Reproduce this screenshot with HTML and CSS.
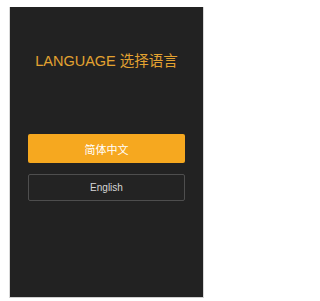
FILE: index.html
```html
<!DOCTYPE html>
<html lang="zh">
<head>
<meta charset="utf-8">
<link rel="stylesheet" href="styles.css">
</head>
<body>
<div class="panel">
  <h1 class="title">LANGUAGE 选择语言</h1>
  <div class="buttons">
    <div class="btn btn-primary">简体中文</div>
    <div class="btn btn-outline">English</div>
  </div>
</div>
</body>
</html>
```
FILE: styles.css
```css
html, body {
  margin: 0;
  padding: 0;
  background: #ffffff;
}
body {
  padding: 7px 0 0 9px;
  font-family: "Liberation Sans", Arial, "Noto Sans CJK SC", sans-serif;
}
.panel {
  box-sizing: border-box;
  width: 195px;
  height: 291px;
  background: #222222;
  border-left: 1px solid #d8d8d8;
  border-right: 1px solid #d8d8d8;
  border-bottom: 1px solid #cfcfcf;
  padding: 46px 18px 0 18px;
  display: flex;
  flex-direction: column;
}
.title {
  margin: 0;
  font-weight: normal;
  font-size: 14.5px;
  line-height: 17px;
  color: #e3a231;
  text-align: center;
  white-space: nowrap;
}
.buttons {
  margin-top: 64px;
  display: flex;
  flex-direction: column;
  gap: 11px;
}
.btn {
  box-sizing: border-box;
  border-radius: 2px;
  text-align: center;
  display: flex;
  align-items: center;
  justify-content: center;
}
.btn-primary {
  height: 29px;
  background: #f6a81f;
  color: #ffffff;
  font-size: 11px;
}
.btn-outline {
  height: 27px;
  border: 1px solid #4e4e4e;
  background: #232323;
  color: #d6d6d6;
  font-size: 10px;
}
```
